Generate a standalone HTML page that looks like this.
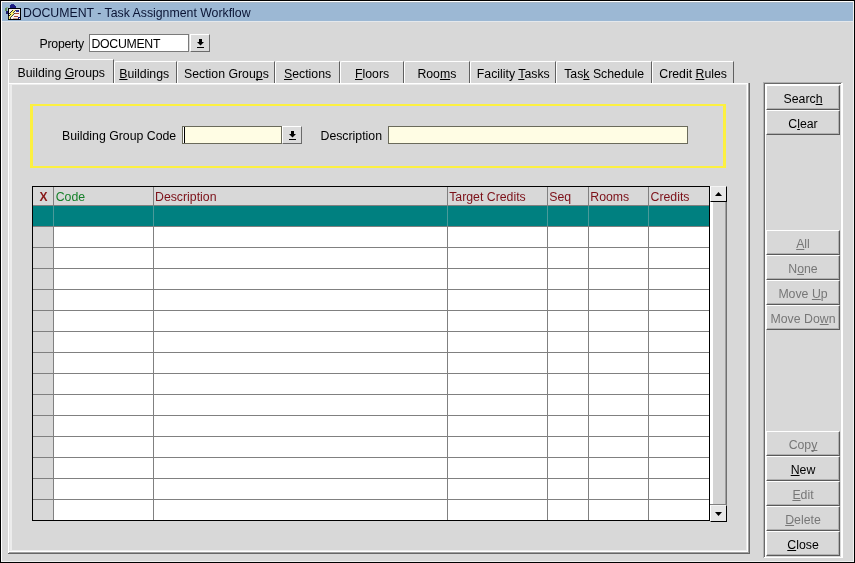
<!DOCTYPE html>
<html><head><meta charset="utf-8"><style>
html,body{margin:0;padding:0;width:855px;height:563px;overflow:hidden;font-family:"Liberation Sans", sans-serif;}
u{text-decoration:underline;text-underline-offset:1px;text-decoration-skip-ink:none}
</style></head><body>
<div style="position:absolute;left:0;top:0;width:855px;height:563px;overflow:hidden;will-change:transform">
<div style="position:absolute;left:0px;top:0px;width:855px;height:563px;background:#d8d8d8"></div>
<div style="position:absolute;left:0px;top:0px;width:855px;height:1px;background:#000"></div>
<div style="position:absolute;left:0px;top:0px;width:1px;height:563px;background:#000"></div>
<div style="position:absolute;left:854px;top:0px;width:1px;height:563px;background:#000"></div>
<div style="position:absolute;left:0px;top:562px;width:855px;height:1px;background:#000"></div>
<div style="position:absolute;left:1px;top:1px;width:853px;height:1px;background:#fff"></div>
<div style="position:absolute;left:1px;top:1px;width:1px;height:561px;background:#fff"></div>
<div style="position:absolute;left:853px;top:1px;width:1px;height:561px;background:#f0f0f0"></div>
<div style="position:absolute;left:1px;top:561px;width:853px;height:1px;background:#f0f0f0"></div>
<div style="position:absolute;left:2px;top:2px;width:851px;height:19px;background:#9cb8d4"></div>
<div style="position:absolute;left:2px;top:2px;width:851px;height:1px;background:#a8b8c8"></div>
<div style="position:absolute;left:2px;top:21px;width:851px;height:1px;background:#e4e8ec"></div>
<div style="position:absolute;left:23px;top:6.59px;font-size:12.3px;line-height:12.3px;color:#0a1434;font-weight:normal;white-space:nowrap;">DOCUMENT - Task Assignment Workflow</div>
<svg style="position:absolute;left:0px;top:0px" width="22" height="22" viewBox="0 0 22 22" shape-rendering="crispEdges">
<rect x="6" y="7" width="2" height="1" fill="#8ab08a"/>
<rect x="5" y="8" width="2" height="3" fill="#5a8a5a"/>
<rect x="6" y="11" width="2" height="3" fill="#1a1a6a"/>
<rect x="11" y="4" width="3" height="1" fill="#2a2a90"/>
<rect x="10" y="5" width="5" height="1" fill="#1a1a80"/>
<rect x="10" y="6" width="6" height="2" fill="#1a1a80"/>
<rect x="8" y="8" width="13" height="12" fill="#000"/>
<rect x="9" y="9" width="11" height="10" fill="#f6f0ee"/>
<rect x="16" y="10" width="3" height="2" fill="#2a2a90"/>
<rect x="15" y="13" width="4" height="1" fill="#b04a3a"/>
<rect x="14" y="16" width="4" height="1" fill="#b04a3a"/>
<rect x="13" y="18" width="5" height="1" fill="#d0a090"/>
<rect x="13" y="10" width="1" height="1" fill="#f6ee70"/><rect x="14" y="10" width="1" height="1" fill="#f6ee70"/><rect x="12" y="10" width="1" height="1" fill="#222"/><rect x="15" y="10" width="1" height="1" fill="#444"/><rect x="12" y="11" width="1" height="1" fill="#f6ee70"/><rect x="13" y="11" width="1" height="1" fill="#f6ee70"/><rect x="11" y="11" width="1" height="1" fill="#222"/><rect x="14" y="11" width="1" height="1" fill="#444"/><rect x="11" y="12" width="1" height="1" fill="#f6ee70"/><rect x="12" y="12" width="1" height="1" fill="#f6ee70"/><rect x="10" y="12" width="1" height="1" fill="#222"/><rect x="13" y="12" width="1" height="1" fill="#444"/><rect x="10" y="13" width="1" height="1" fill="#f6ee70"/><rect x="11" y="13" width="1" height="1" fill="#f6ee70"/><rect x="12" y="13" width="1" height="1" fill="#f6ee70"/><rect x="13" y="13" width="1" height="1" fill="#f6ee70"/><rect x="9" y="13" width="1" height="1" fill="#222"/><rect x="14" y="13" width="1" height="1" fill="#444"/><rect x="11" y="14" width="1" height="1" fill="#f6ee70"/><rect x="12" y="14" width="1" height="1" fill="#f6ee70"/><rect x="10" y="14" width="1" height="1" fill="#222"/><rect x="13" y="14" width="1" height="1" fill="#444"/><rect x="10" y="15" width="1" height="1" fill="#f6ee70"/><rect x="11" y="15" width="1" height="1" fill="#f6ee70"/><rect x="9" y="15" width="1" height="1" fill="#222"/><rect x="12" y="15" width="1" height="1" fill="#444"/><rect x="9" y="16" width="1" height="1" fill="#f6ee70"/><rect x="10" y="16" width="1" height="1" fill="#f6ee70"/><rect x="8" y="16" width="1" height="1" fill="#222"/><rect x="11" y="16" width="1" height="1" fill="#444"/><rect x="9" y="17" width="1" height="1" fill="#f6ee70"/><rect x="8" y="17" width="1" height="1" fill="#222"/><rect x="10" y="17" width="1" height="1" fill="#444"/><rect x="9" y="18" width="1" height="1" fill="#f6ee70"/><rect x="8" y="18" width="1" height="1" fill="#222"/><rect x="10" y="18" width="1" height="1" fill="#444"/>
<rect x="18" y="17" width="2" height="2" fill="#1a1a80"/>
<rect x="19" y="18" width="1" height="1" fill="#e8e8f0"/>
</svg>
<div style="position:absolute;left:39.5px;top:37.79px;font-size:12.3px;line-height:12.3px;color:#000;font-weight:normal;white-space:nowrap;letter-spacing:-0.25px">Property</div>
<div style="position:absolute;left:89px;top:34px;width:100px;height:18px;background:#fff;border:1px solid #7a7a7a;box-sizing:border-box"></div>
<div style="position:absolute;left:91.5px;top:37.59px;font-size:12.3px;line-height:12.3px;color:#000;font-weight:normal;white-space:nowrap;letter-spacing:-0.3px">DOCUMENT</div>
<div style="position:absolute;left:190px;top:34px;width:20px;height:18px;background:#dcdcdc;border-top:1px solid #fff;border-left:1px solid #fff;border-right:1px solid #6a6a6a;border-bottom:1px solid #6a6a6a;box-sizing:border-box"></div>
<svg style="position:absolute;left:197px;top:39px" width="7" height="10" viewBox="0 0 7 10"><rect x="2" y="0" width="3" height="3" fill="#000"/><path d="M0 3 H7 L3.5 6.5 Z" fill="#000"/><rect x="0" y="8" width="7" height="1" fill="#000"/></svg>
<div style="position:absolute;left:8px;top:59px;width:106px;height:24px;background:#d8d8d8;border-top:1px solid #fff;border-left:1px solid #fff;border-right:1px solid #606060;box-sizing:border-box;border-top-left-radius:2px"></div>
<div style="position:absolute;left:17.5px;top:66.59px;font-size:12.3px;line-height:12.3px;color:#000;font-weight:normal;white-space:nowrap;">Building <u>G</u>roups</div>
<div style="position:absolute;left:114px;top:61px;width:63px;height:22px;background:#d8d8d8;border-top:1px solid #fff;border-left:1px solid #fff;border-right:1px solid #606060;box-sizing:border-box;border-top-left-radius:2px"></div>
<div style="position:absolute;left:119.3px;top:67.59px;font-size:12.3px;line-height:12.3px;color:#000;font-weight:normal;white-space:nowrap;"><u>B</u>uildings</div>
<div style="position:absolute;left:177px;top:61px;width:98px;height:22px;background:#d8d8d8;border-top:1px solid #fff;border-left:1px solid #fff;border-right:1px solid #606060;box-sizing:border-box;border-top-left-radius:2px"></div>
<div style="position:absolute;left:184px;top:67.59px;font-size:12.3px;line-height:12.3px;color:#000;font-weight:normal;white-space:nowrap;">Section Grou<u>p</u>s</div>
<div style="position:absolute;left:275px;top:61px;width:65px;height:22px;background:#d8d8d8;border-top:1px solid #fff;border-left:1px solid #fff;border-right:1px solid #606060;box-sizing:border-box;border-top-left-radius:2px"></div>
<div style="position:absolute;left:284px;top:67.59px;font-size:12.3px;line-height:12.3px;color:#000;font-weight:normal;white-space:nowrap;"><u>S</u>ections</div>
<div style="position:absolute;left:340px;top:61px;width:64px;height:22px;background:#d8d8d8;border-top:1px solid #fff;border-left:1px solid #fff;border-right:1px solid #606060;box-sizing:border-box;border-top-left-radius:2px"></div>
<div style="position:absolute;left:355px;top:67.59px;font-size:12.3px;line-height:12.3px;color:#000;font-weight:normal;white-space:nowrap;"><u>F</u>loors</div>
<div style="position:absolute;left:404px;top:61px;width:66px;height:22px;background:#d8d8d8;border-top:1px solid #fff;border-left:1px solid #fff;border-right:1px solid #606060;box-sizing:border-box;border-top-left-radius:2px"></div>
<div style="position:absolute;left:417.4px;top:67.59px;font-size:12.3px;line-height:12.3px;color:#000;font-weight:normal;white-space:nowrap;">Roo<u>m</u>s</div>
<div style="position:absolute;left:470px;top:61px;width:86px;height:22px;background:#d8d8d8;border-top:1px solid #fff;border-left:1px solid #fff;border-right:1px solid #606060;box-sizing:border-box;border-top-left-radius:2px"></div>
<div style="position:absolute;left:476.8px;top:67.59px;font-size:12.3px;line-height:12.3px;color:#000;font-weight:normal;white-space:nowrap;">Facility <u>T</u>asks</div>
<div style="position:absolute;left:556px;top:61px;width:96px;height:22px;background:#d8d8d8;border-top:1px solid #fff;border-left:1px solid #fff;border-right:1px solid #606060;box-sizing:border-box;border-top-left-radius:2px"></div>
<div style="position:absolute;left:564.2px;top:67.59px;font-size:12.3px;line-height:12.3px;color:#000;font-weight:normal;white-space:nowrap;">Tas<u>k</u> Schedule</div>
<div style="position:absolute;left:652px;top:61px;width:82px;height:22px;background:#d8d8d8;border-top:1px solid #fff;border-left:1px solid #fff;border-right:1px solid #606060;box-sizing:border-box;border-top-left-radius:2px"></div>
<div style="position:absolute;left:659.3px;top:67.59px;font-size:12.3px;line-height:12.3px;color:#000;font-weight:normal;white-space:nowrap;">Credit <u>R</u>ules</div>
<div style="position:absolute;left:8px;top:83px;width:1px;height:471px;background:#fff"></div>
<div style="position:absolute;left:9px;top:84px;width:1px;height:468px;background:#e4e4e4"></div>
<div style="position:absolute;left:10px;top:84px;width:2px;height:467px;background:#ececec"></div>
<div style="position:absolute;left:9px;top:83px;width:739px;height:1px;background:#fff"></div>
<div style="position:absolute;left:12px;top:84px;width:735px;height:1px;background:#ececec"></div>
<div style="position:absolute;left:746px;top:84px;width:1px;height:467px;background:#ececec"></div>
<div style="position:absolute;left:747px;top:84px;width:1px;height:468px;background:#fff"></div>
<div style="position:absolute;left:748px;top:83px;width:1px;height:471px;background:#a0a0a0"></div>
<div style="position:absolute;left:749px;top:83px;width:1px;height:471px;background:#666"></div>
<div style="position:absolute;left:12px;top:550px;width:735px;height:1px;background:#ececec"></div>
<div style="position:absolute;left:9px;top:551px;width:739px;height:1px;background:#fff"></div>
<div style="position:absolute;left:9px;top:552px;width:740px;height:1px;background:#a0a0a0"></div>
<div style="position:absolute;left:8px;top:553px;width:742px;height:1px;background:#666"></div>
<div style="position:absolute;left:30px;top:104px;width:696px;height:64px;border:2px solid #fcf040;border-left-width:3px;border-right-width:3px;box-sizing:border-box"></div>
<div style="position:absolute;left:62px;top:129.59px;font-size:12.3px;line-height:12.3px;color:#000;font-weight:normal;white-space:nowrap;">Building Group Code</div>
<div style="position:absolute;left:182px;top:126px;width:100px;height:18px;background:#fffde4;border:1px solid #6b6b5b;box-sizing:border-box"></div>
<div style="position:absolute;left:183px;top:127px;width:1px;height:16px;background:#fff"></div>
<div style="position:absolute;left:184px;top:127px;width:1px;height:16px;background:#000"></div>
<div style="position:absolute;left:282px;top:126px;width:20px;height:18px;background:#dcdcdc;border-top:1px solid #fff;border-left:1px solid #fff;border-right:1px solid #6a6a6a;border-bottom:1px solid #6a6a6a;box-sizing:border-box"></div>
<svg style="position:absolute;left:289px;top:131px" width="7" height="10" viewBox="0 0 7 10"><rect x="2" y="0" width="3" height="3" fill="#000"/><path d="M0 3 H7 L3.5 6.5 Z" fill="#000"/><rect x="0" y="8" width="7" height="1" fill="#000"/></svg>
<div style="position:absolute;left:320.5px;top:129.89px;font-size:12.3px;line-height:12.3px;color:#000;font-weight:normal;white-space:nowrap;">Description</div>
<div style="position:absolute;left:388px;top:126px;width:300px;height:18px;background:#fffde4;border:1px solid #6b6b5b;box-sizing:border-box"></div>
<div style="position:absolute;left:32px;top:186px;width:678px;height:335px;background:#fff;border:1px solid #000;box-sizing:border-box"></div>
<div style="position:absolute;left:33px;top:187px;width:676px;height:18px;background:#d8d8d8"></div>
<div style="position:absolute;left:33px;top:205px;width:676px;height:1px;background:#808080"></div>
<div style="position:absolute;left:33px;top:206px;width:676px;height:20px;background:#008080"></div>
<div style="position:absolute;left:33px;top:226px;width:676px;height:1px;background:#808080"></div>
<div style="position:absolute;left:33px;top:227px;width:20px;height:20px;background:#d8d8d8"></div>
<div style="position:absolute;left:33px;top:247px;width:676px;height:1px;background:#808080"></div>
<div style="position:absolute;left:33px;top:248px;width:20px;height:20px;background:#d8d8d8"></div>
<div style="position:absolute;left:33px;top:268px;width:676px;height:1px;background:#808080"></div>
<div style="position:absolute;left:33px;top:269px;width:20px;height:20px;background:#d8d8d8"></div>
<div style="position:absolute;left:33px;top:289px;width:676px;height:1px;background:#808080"></div>
<div style="position:absolute;left:33px;top:290px;width:20px;height:20px;background:#d8d8d8"></div>
<div style="position:absolute;left:33px;top:310px;width:676px;height:1px;background:#808080"></div>
<div style="position:absolute;left:33px;top:311px;width:20px;height:20px;background:#d8d8d8"></div>
<div style="position:absolute;left:33px;top:331px;width:676px;height:1px;background:#808080"></div>
<div style="position:absolute;left:33px;top:332px;width:20px;height:20px;background:#d8d8d8"></div>
<div style="position:absolute;left:33px;top:352px;width:676px;height:1px;background:#808080"></div>
<div style="position:absolute;left:33px;top:353px;width:20px;height:20px;background:#d8d8d8"></div>
<div style="position:absolute;left:33px;top:373px;width:676px;height:1px;background:#808080"></div>
<div style="position:absolute;left:33px;top:374px;width:20px;height:20px;background:#d8d8d8"></div>
<div style="position:absolute;left:33px;top:394px;width:676px;height:1px;background:#808080"></div>
<div style="position:absolute;left:33px;top:395px;width:20px;height:20px;background:#d8d8d8"></div>
<div style="position:absolute;left:33px;top:415px;width:676px;height:1px;background:#808080"></div>
<div style="position:absolute;left:33px;top:416px;width:20px;height:20px;background:#d8d8d8"></div>
<div style="position:absolute;left:33px;top:436px;width:676px;height:1px;background:#808080"></div>
<div style="position:absolute;left:33px;top:437px;width:20px;height:20px;background:#d8d8d8"></div>
<div style="position:absolute;left:33px;top:457px;width:676px;height:1px;background:#808080"></div>
<div style="position:absolute;left:33px;top:458px;width:20px;height:20px;background:#d8d8d8"></div>
<div style="position:absolute;left:33px;top:478px;width:676px;height:1px;background:#808080"></div>
<div style="position:absolute;left:33px;top:479px;width:20px;height:20px;background:#d8d8d8"></div>
<div style="position:absolute;left:33px;top:499px;width:676px;height:1px;background:#808080"></div>
<div style="position:absolute;left:33px;top:500px;width:20px;height:20px;background:#d8d8d8"></div>
<div style="position:absolute;left:53px;top:187px;width:1px;height:333px;background:#808080"></div>
<div style="position:absolute;left:53px;top:206px;width:1px;height:20px;background:#4a9a9a"></div>
<div style="position:absolute;left:153px;top:187px;width:1px;height:333px;background:#808080"></div>
<div style="position:absolute;left:153px;top:206px;width:1px;height:20px;background:#4a9a9a"></div>
<div style="position:absolute;left:447px;top:187px;width:1px;height:333px;background:#808080"></div>
<div style="position:absolute;left:447px;top:206px;width:1px;height:20px;background:#4a9a9a"></div>
<div style="position:absolute;left:547px;top:187px;width:1px;height:333px;background:#808080"></div>
<div style="position:absolute;left:547px;top:206px;width:1px;height:20px;background:#4a9a9a"></div>
<div style="position:absolute;left:588px;top:187px;width:1px;height:333px;background:#808080"></div>
<div style="position:absolute;left:588px;top:206px;width:1px;height:20px;background:#4a9a9a"></div>
<div style="position:absolute;left:648px;top:187px;width:1px;height:333px;background:#808080"></div>
<div style="position:absolute;left:648px;top:206px;width:1px;height:20px;background:#4a9a9a"></div>
<div style="position:absolute;left:39.4px;top:190.84px;font-size:12px;line-height:12px;color:#881818;font-weight:bold;white-space:nowrap;">X</div>
<div style="position:absolute;left:55.7px;top:190.59px;font-size:12.3px;line-height:12.3px;color:#16802a;font-weight:normal;white-space:nowrap;">Code</div>
<div style="position:absolute;left:155px;top:190.59px;font-size:12.3px;line-height:12.3px;color:#7c1018;font-weight:normal;white-space:nowrap;">Description</div>
<div style="position:absolute;left:449.2px;top:190.59px;font-size:12.3px;line-height:12.3px;color:#7c1018;font-weight:normal;white-space:nowrap;">Target Credits</div>
<div style="position:absolute;left:549.3px;top:190.59px;font-size:12.3px;line-height:12.3px;color:#7c1018;font-weight:normal;white-space:nowrap;">Seq</div>
<div style="position:absolute;left:590.3px;top:190.59px;font-size:12.3px;line-height:12.3px;color:#7c1018;font-weight:normal;white-space:nowrap;">Rooms</div>
<div style="position:absolute;left:650.5px;top:190.59px;font-size:12.3px;line-height:12.3px;color:#7c1018;font-weight:normal;white-space:nowrap;">Credits</div>
<div style="position:absolute;left:710px;top:186px;width:17px;height:336px;background:#d8d8d8"></div>
<div style="position:absolute;left:710px;top:202px;width:3px;height:303px;background:#fff"></div>
<div style="position:absolute;left:713px;top:202px;width:12px;height:303px;background:#d4d4d4"></div>
<div style="position:absolute;left:725px;top:202px;width:1px;height:303px;background:#a0a0a0"></div>
<div style="position:absolute;left:726px;top:202px;width:1px;height:303px;background:#707070"></div>
<div style="position:absolute;left:710px;top:504px;width:17px;height:1px;background:#808080"></div>
<div style="position:absolute;left:710px;top:186px;width:17px;height:16px;background:#e6e6e6;border-top:1px solid #f4f4f4;border-left:1px solid #fff;border-right:1px solid #000;border-bottom:1px solid #000;box-sizing:border-box"></div>
<svg style="position:absolute;left:715px;top:192px" width="7" height="4"><path d="M0 4 H7 L3.5 0 Z" fill="#000"/></svg>
<div style="position:absolute;left:710px;top:505px;width:17px;height:17px;background:#e6e6e6;border-top:1px solid #f4f4f4;border-left:1px solid #fff;border-right:1px solid #000;border-bottom:1px solid #000;box-sizing:border-box"></div>
<svg style="position:absolute;left:715px;top:512px" width="7" height="4"><path d="M0 0 H7 L3.5 4 Z" fill="#000"/></svg>
<div style="position:absolute;left:764px;top:83px;width:78px;height:475px;border-top:1px solid #6a6a6a;border-left:1px solid #6a6a6a;box-sizing:border-box"></div>
<div style="position:absolute;left:763px;top:82px;width:79px;height:1px;background:#b0b0b0"></div>
<div style="position:absolute;left:763px;top:82px;width:1px;height:476px;background:#b0b0b0"></div>
<div style="position:absolute;left:765px;top:84px;width:77px;height:1px;background:#fff"></div>
<div style="position:absolute;left:765px;top:84px;width:1px;height:473px;background:#fff"></div>
<div style="position:absolute;left:841px;top:83px;width:2px;height:475px;background:#fff"></div>
<div style="position:absolute;left:764px;top:557px;width:79px;height:1px;background:#fff"></div>
<div style="position:absolute;left:766px;top:85px;width:74px;height:25px;background:#d8d8d8;border-top:1px solid #fff;border-left:1px solid #fff;border-right:1px solid #5a5a5a;border-bottom:1px solid #5a5a5a;box-sizing:border-box"></div>
<div style="position:absolute;left:767px;top:108px;width:72px;height:1px;background:#b0b0b0"></div>
<div style="position:absolute;left:838px;top:86px;width:1px;height:23px;background:#b0b0b0"></div>
<div style="position:absolute;left:703px;width:200px;text-align:center;top:92.59px;font-size:12.3px;line-height:12.3px;color:#000;font-weight:normal;white-space:nowrap">Searc<u>h</u></div>
<div style="position:absolute;left:766px;top:110px;width:74px;height:25px;background:#d8d8d8;border-top:1px solid #fff;border-left:1px solid #fff;border-right:1px solid #5a5a5a;border-bottom:1px solid #5a5a5a;box-sizing:border-box"></div>
<div style="position:absolute;left:767px;top:133px;width:72px;height:1px;background:#b0b0b0"></div>
<div style="position:absolute;left:838px;top:111px;width:1px;height:23px;background:#b0b0b0"></div>
<div style="position:absolute;left:703px;width:200px;text-align:center;top:117.59px;font-size:12.3px;line-height:12.3px;color:#000;font-weight:normal;white-space:nowrap">C<u>l</u>ear</div>
<div style="position:absolute;left:766px;top:230px;width:74px;height:25px;background:#d8d8d8;border-top:1px solid #fff;border-left:1px solid #fff;border-right:1px solid #5a5a5a;border-bottom:1px solid #5a5a5a;box-sizing:border-box"></div>
<div style="position:absolute;left:767px;top:253px;width:72px;height:1px;background:#b0b0b0"></div>
<div style="position:absolute;left:838px;top:231px;width:1px;height:23px;background:#b0b0b0"></div>
<div style="position:absolute;left:703px;width:200px;text-align:center;top:237.59px;font-size:12.3px;line-height:12.3px;color:#777;font-weight:normal;white-space:nowrap"><u>A</u>ll</div>
<div style="position:absolute;left:766px;top:255px;width:74px;height:25px;background:#d8d8d8;border-top:1px solid #fff;border-left:1px solid #fff;border-right:1px solid #5a5a5a;border-bottom:1px solid #5a5a5a;box-sizing:border-box"></div>
<div style="position:absolute;left:767px;top:278px;width:72px;height:1px;background:#b0b0b0"></div>
<div style="position:absolute;left:838px;top:256px;width:1px;height:23px;background:#b0b0b0"></div>
<div style="position:absolute;left:703px;width:200px;text-align:center;top:262.59px;font-size:12.3px;line-height:12.3px;color:#777;font-weight:normal;white-space:nowrap">N<u>o</u>ne</div>
<div style="position:absolute;left:766px;top:280px;width:74px;height:25px;background:#d8d8d8;border-top:1px solid #fff;border-left:1px solid #fff;border-right:1px solid #5a5a5a;border-bottom:1px solid #5a5a5a;box-sizing:border-box"></div>
<div style="position:absolute;left:767px;top:303px;width:72px;height:1px;background:#b0b0b0"></div>
<div style="position:absolute;left:838px;top:281px;width:1px;height:23px;background:#b0b0b0"></div>
<div style="position:absolute;left:703px;width:200px;text-align:center;top:287.59px;font-size:12.3px;line-height:12.3px;color:#777;font-weight:normal;white-space:nowrap">Move <u>U</u>p</div>
<div style="position:absolute;left:766px;top:305px;width:74px;height:25px;background:#d8d8d8;border-top:1px solid #fff;border-left:1px solid #fff;border-right:1px solid #5a5a5a;border-bottom:1px solid #5a5a5a;box-sizing:border-box"></div>
<div style="position:absolute;left:767px;top:328px;width:72px;height:1px;background:#b0b0b0"></div>
<div style="position:absolute;left:838px;top:306px;width:1px;height:23px;background:#b0b0b0"></div>
<div style="position:absolute;left:703px;width:200px;text-align:center;top:312.59px;font-size:12.3px;line-height:12.3px;color:#777;font-weight:normal;white-space:nowrap">Move Do<u>w</u>n</div>
<div style="position:absolute;left:766px;top:431px;width:74px;height:25px;background:#d8d8d8;border-top:1px solid #fff;border-left:1px solid #fff;border-right:1px solid #5a5a5a;border-bottom:1px solid #5a5a5a;box-sizing:border-box"></div>
<div style="position:absolute;left:767px;top:454px;width:72px;height:1px;background:#b0b0b0"></div>
<div style="position:absolute;left:838px;top:432px;width:1px;height:23px;background:#b0b0b0"></div>
<div style="position:absolute;left:703px;width:200px;text-align:center;top:438.59px;font-size:12.3px;line-height:12.3px;color:#777;font-weight:normal;white-space:nowrap">Cop<u>y</u></div>
<div style="position:absolute;left:766px;top:456px;width:74px;height:25px;background:#d8d8d8;border-top:1px solid #fff;border-left:1px solid #fff;border-right:1px solid #5a5a5a;border-bottom:1px solid #5a5a5a;box-sizing:border-box"></div>
<div style="position:absolute;left:767px;top:479px;width:72px;height:1px;background:#b0b0b0"></div>
<div style="position:absolute;left:838px;top:457px;width:1px;height:23px;background:#b0b0b0"></div>
<div style="position:absolute;left:703px;width:200px;text-align:center;top:463.59px;font-size:12.3px;line-height:12.3px;color:#000;font-weight:normal;white-space:nowrap"><u>N</u>ew</div>
<div style="position:absolute;left:766px;top:481px;width:74px;height:25px;background:#d8d8d8;border-top:1px solid #fff;border-left:1px solid #fff;border-right:1px solid #5a5a5a;border-bottom:1px solid #5a5a5a;box-sizing:border-box"></div>
<div style="position:absolute;left:767px;top:504px;width:72px;height:1px;background:#b0b0b0"></div>
<div style="position:absolute;left:838px;top:482px;width:1px;height:23px;background:#b0b0b0"></div>
<div style="position:absolute;left:703px;width:200px;text-align:center;top:488.59px;font-size:12.3px;line-height:12.3px;color:#777;font-weight:normal;white-space:nowrap"><u>E</u>dit</div>
<div style="position:absolute;left:766px;top:506px;width:74px;height:25px;background:#d8d8d8;border-top:1px solid #fff;border-left:1px solid #fff;border-right:1px solid #5a5a5a;border-bottom:1px solid #5a5a5a;box-sizing:border-box"></div>
<div style="position:absolute;left:767px;top:529px;width:72px;height:1px;background:#b0b0b0"></div>
<div style="position:absolute;left:838px;top:507px;width:1px;height:23px;background:#b0b0b0"></div>
<div style="position:absolute;left:703px;width:200px;text-align:center;top:513.59px;font-size:12.3px;line-height:12.3px;color:#777;font-weight:normal;white-space:nowrap"><u>D</u>elete</div>
<div style="position:absolute;left:766px;top:531px;width:74px;height:25px;background:#d8d8d8;border-top:1px solid #fff;border-left:1px solid #fff;border-right:1px solid #5a5a5a;border-bottom:1px solid #5a5a5a;box-sizing:border-box"></div>
<div style="position:absolute;left:767px;top:554px;width:72px;height:1px;background:#b0b0b0"></div>
<div style="position:absolute;left:838px;top:532px;width:1px;height:23px;background:#b0b0b0"></div>
<div style="position:absolute;left:703px;width:200px;text-align:center;top:538.59px;font-size:12.3px;line-height:12.3px;color:#000;font-weight:normal;white-space:nowrap"><u>C</u>lose</div>
</div>
</body></html>
